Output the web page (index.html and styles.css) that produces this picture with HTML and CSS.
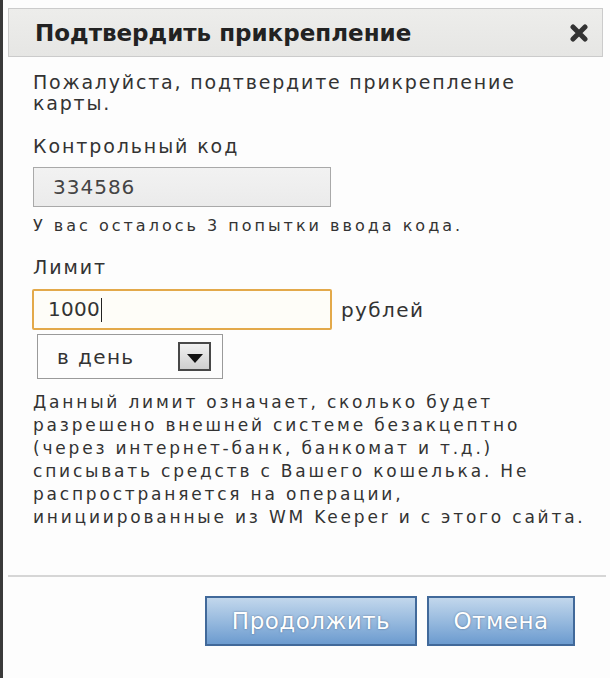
FILE: index.html
```html
<!DOCTYPE html>
<html lang="ru">
<head>
<meta charset="utf-8">
<title>Подтвердить прикрепление</title>
<link rel="stylesheet" href="styles.css">
</head>
<body>
<div class="frame">
  <div class="header">
    <h1 class="title">Подтвердить прикрепление</h1>
    <span class="close" aria-label="Закрыть">
      <svg width="18" height="18" viewBox="0 0 18 18"><path d="M3 3 L15 15 M15 3 L3 15" stroke="#333" stroke-width="5" stroke-linecap="round"/></svg>
    </span>
  </div>
  <div class="content">
    <p class="intro">Пожалуйста, подтвердите прикрепление<br>карты.</p>
    <p class="label label-code">Контрольный код</p>
    <div class="code-input">334586</div>
    <p class="hint">У вас осталось 3 попытки ввода кода.</p>
    <p class="label label-limit">Лимит</p>
    <div class="limit-row">
      <div class="limit-input">1000<span class="caret"></span></div>
      <span class="unit">рублей</span>
    </div>
    <div class="select">
      <span class="select-text">в день</span>
      <span class="select-arrow"><span class="tri"></span></span>
    </div>
    <p class="desc">Данный лимит означает, сколько будет<br>разрешено внешней системе безакцептно<br>(через интернет-банк, банкомат и т.д.)<br>списывать средств с Вашего кошелька. Не<br>распространяется на операции,<br>инициированные из WM Keeper и с этого сайта.</p>
  </div>
  <div class="divider"></div>
  <div class="buttons">
    <button class="btn btn-continue">Продолжить</button>
    <button class="btn btn-cancel">Отмена</button>
  </div>
</div>
</body>
</html>
```

FILE: styles.css
```css
html, body {
  margin: 0;
  padding: 0;
  background: #ffffff;
}
body {
  font-family: "DejaVu Sans", Verdana, sans-serif;
  color: #333;
}
.frame {
  width: 610px;
  height: 678px;
  box-sizing: border-box;
  border-left: 3px solid #3a3a3a;
  background: #fdfdfd;
  padding-top: 8px;
  overflow: hidden;
}
.header {
  margin-left: 5px;
  width: 595px;
  height: 49px;
  box-sizing: border-box;
  background: linear-gradient(#ededeb, #e6e6e4);
  border: 1px solid #cbcbcb;
  display: flex;
  align-items: center;
  justify-content: space-between;
  padding: 0 14px 0 26px;
}
.title {
  margin: 0;
  font-family: "DejaVu Sans", Verdana, sans-serif;
  font-weight: bold;
  font-size: 23px;
  color: #222;
  letter-spacing: 0;
}
.close {
  display: flex;
  width: 18px;
  height: 18px;
}
.content {
  padding-left: 30px;
}
p {
  margin: 0;
}
.intro {
  margin-top: 15px;
  font-size: 19px;
  line-height: 21px;
  letter-spacing: 1.8px;
  color: #333;
}
.label {
  font-size: 19px;
  line-height: 21px;
  letter-spacing: 1.9px;
  color: #333;
}
.label-code {
  margin-top: 22px;
}
.code-input {
  margin-top: 10px;
  width: 298px;
  height: 40px;
  box-sizing: border-box;
  background: linear-gradient(#f2f2f2, #ebebeb);
  border: 1px solid #a9a9a9;
  padding-left: 19px;
  font-size: 20px;
  line-height: 38px;
  letter-spacing: 1px;
  color: #444;
}
.hint {
  margin-top: 9px;
  font-size: 16px;
  line-height: 20px;
  letter-spacing: 3px;
  color: #333;
}
.label-limit {
  margin-top: 21px;
}
.limit-row {
  margin-top: 11px;
  margin-left: -1px;
  display: flex;
  align-items: center;
  gap: 9px;
}
.limit-input {
  width: 300px;
  height: 41px;
  box-sizing: border-box;
  border: 2px solid #e3a94a;
  border-radius: 2px;
  background: #fefdf8;
  padding-left: 14px;
  font-size: 20px;
  line-height: 37px;
  letter-spacing: 0.3px;
  color: #333;
  display: flex;
  align-items: center;
}
.caret {
  display: inline-block;
  width: 1px;
  height: 24px;
  background: #222;
  margin-left: 1px;
}
.unit {
  font-size: 20px;
  letter-spacing: 1.4px;
  color: #333;
}
.select {
  margin-top: 4px;
  margin-left: 4px;
  width: 186px;
  height: 45px;
  box-sizing: border-box;
  border: 1px solid #9a9a9a;
  background: #fdfdfd;
  display: flex;
  align-items: center;
  justify-content: space-between;
  padding: 0 11px 0 19px;
}
.select-text {
  font-size: 20px;
  letter-spacing: 1.4px;
  color: #333;
}
.select-arrow {
  width: 33px;
  height: 29px;
  box-sizing: border-box;
  border: 2px solid #484848;
  background: linear-gradient(#f0f0f0, #cfcfcf);
  display: flex;
  align-items: flex-end;
  justify-content: center;
  padding-bottom: 6px;
}
.tri {
  width: 0;
  height: 0;
  border-left: 8px solid transparent;
  border-right: 8px solid transparent;
  border-top: 9px solid #111;
}
.desc {
  margin-top: 12px;
  font-size: 17px;
  line-height: 23px;
  letter-spacing: 2.8px;
  color: #333;
}
.divider {
  margin-top: 46px;
  margin-left: 5px;
  width: 598px;
  height: 2px;
  background: #d6d6d6;
}
.buttons {
  margin-top: 19px;
  display: flex;
  justify-content: flex-end;
  gap: 10px;
  padding-right: 35px;
}
.btn {
  height: 50px;
  box-sizing: border-box;
  border: 2px solid #41699a;
  background: linear-gradient(#c2d7ec, #93b7dd 55%, #6c9bcf);
  color: #fff;
  font-family: "DejaVu Sans", Verdana, sans-serif;
  font-size: 23px;
  letter-spacing: 0.5px;
  text-shadow: 0 0 2px rgba(40, 60, 90, 0.6);
  padding: 0;
  cursor: pointer;
}
.btn-continue {
  width: 212px;
}
.btn-cancel {
  width: 148px;
}
```
